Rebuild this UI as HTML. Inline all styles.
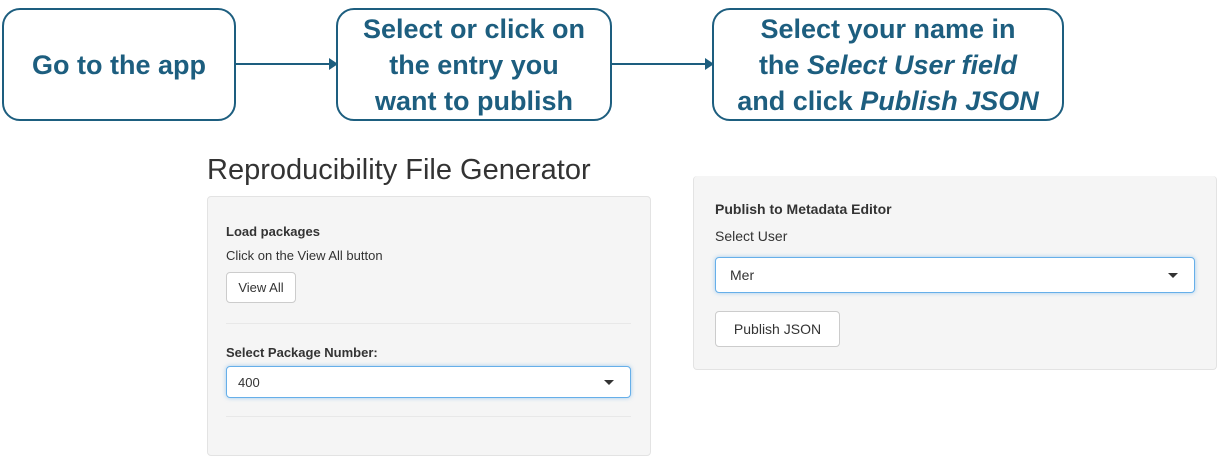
<!DOCTYPE html><html><head><style>
body{margin:0;width:1224px;height:436px;background:#fff;position:relative;overflow:hidden;font-family:"Liberation Sans",sans-serif}
.b{position:absolute;border:2px solid #1d5e7f;border-radius:18px;box-sizing:border-box;display:flex;align-items:center;justify-content:center;text-align:center;color:#1d5e7f;font-weight:bold;font-size:27px;line-height:36px;white-space:nowrap}
.ar{position:absolute;height:2px;background:#1d5e7f;top:63px}
.ar:after{content:"";position:absolute;right:-2px;top:-5px;border-left:9px solid #1d5e7f;border-top:6px solid transparent;border-bottom:6px solid transparent}
.p{position:absolute;background:#f5f5f5;border:1px solid #e3e3e3;border-radius:4px;box-sizing:border-box}
.t{position:absolute;color:#333;font-size:13px}
.btn{position:absolute;background:#fff;border:1px solid #ccc;border-radius:4px;box-sizing:border-box;font-size:13px;color:#333;display:flex;align-items:center;justify-content:center}
.sel{position:absolute;background:#fff;border:1px solid #66afe9;box-shadow:0 0 4px rgba(102,175,233,.6);border-radius:4px;box-sizing:border-box;font-size:13px;color:#333;padding-left:11px;display:flex;align-items:center}
.sel:after{content:"";position:absolute;right:16px;top:50%;margin-top:-2px;border-top:5px solid #333;border-left:5px solid transparent;border-right:5px solid transparent}
hr{position:absolute;border:0;border-top:1px solid #e8e8e8;margin:0}
</style></head><body>
<div class="b" style="left:2px;top:8px;width:234px;height:113px"><div>Go to the app</div></div>
<div class="ar" style="left:236px;width:100px"></div>
<div class="b" style="left:336px;top:8px;width:276px;height:113px"><div>Select or click on<br>the entry you<br>want to publish</div></div>
<div class="ar" style="left:612px;width:100px"></div>
<div class="b" style="left:712px;top:8px;width:352px;height:113px"><div>Select your name in<br>the <i>Select User field</i><br>and click <i>Publish JSON</i></div></div>
<div class="t" style="left:207px;top:154px;font-size:29px;color:#333">Reproducibility File Generator</div>
<div class="p" style="left:207px;top:196px;width:444px;height:260px"></div>
<div class="t" style="left:226px;top:224px;font-weight:bold">Load packages</div>
<div class="t" style="left:226px;top:248px">Click on the View All button</div>
<div class="btn" style="left:226px;top:272px;width:70px;height:31px">View All</div>
<hr style="left:226px;top:323px;width:405px">
<div class="t" style="left:226px;top:345px;font-weight:bold">Select Package Number:</div>
<div class="sel" style="left:226px;top:366px;width:405px;height:32px">400</div>
<hr style="left:226px;top:416px;width:405px">
<div class="p" style="left:693px;top:176px;width:524px;height:194px;border-top:none"></div>
<div class="t" style="left:715px;top:201px;font-size:14px;font-weight:bold">Publish to Metadata Editor</div>
<div class="t" style="left:715px;top:228px;font-size:14px">Select User</div>
<div class="sel" style="left:715px;top:257px;width:480px;height:36px;font-size:14px;padding-left:14px">Mer</div>
<div class="btn" style="left:715px;top:311px;width:125px;height:36px;font-size:14px">Publish JSON</div>
</body></html>
